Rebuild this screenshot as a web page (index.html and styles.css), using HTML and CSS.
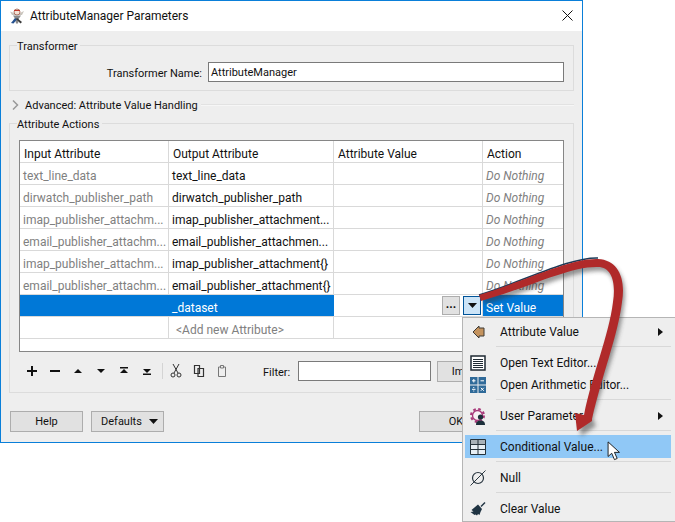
FILE: index.html
```html
<!DOCTYPE html>
<html lang="en">
<head>
<meta charset="utf-8">
<title>AttributeManager Parameters</title>
<link rel="stylesheet" href="styles.css">
</head>
<body>
<div class="stage">
  <div class="dialog">
    <header class="titlebar">
      <svg class="app-icon" width="16" height="16" viewBox="0 0 16 16"><path d="M1 3.500L5 5l6 0 4-2-2 4H3z" fill="#c9c4bc"/><circle cx="8" cy="4" r="3" fill="#f4e3d6" stroke="#a05a4a" stroke-width=".8"/><path d="M5 2.500h6" stroke="#c0392b"/><path d="M4 7.500h8l-2 3-1 5H7l-1-5z" fill="#8a8a8a"/><path d="M2 15l4-5 2 1.500-3.500 4z" fill="#24508f"/><path d="M8 10l5 4-1.500 1.500L7 11z" fill="#3a3a3a"/></svg>
      <span class="title-text">AttributeManager Parameters</span>
      <svg class="close" width="11" height="11" viewBox="0 0 11 11"><path d="M.5.5l10 10M10.500.5l-10 10" stroke="#111" stroke-width="1" fill="none"/></svg>
    </header>
    <div class="content">
      <fieldset class="group group-transformer">
        <legend>Transformer</legend>
        <div class="name-row">
          <label class="name-label">Transformer Name:</label>
          <div class="name-input">AttributeManager</div>
        </div>
      </fieldset>
      <div class="advanced">
        <svg width="7" height="10" viewBox="0 0 7 10"><path d="M1 .5l4.500 4.500-4.500 4.500" fill="none" stroke="#999" stroke-width="1.500"/></svg>
        <span class="advanced-text">Advanced: Attribute Value Handling</span>
        <i class="advanced-line"></i>
      </div>
      <fieldset class="group group-actions">
        <legend>Attribute Actions</legend>
        <div class="table">
          <div class="row head">
            <div class="cell">Input Attribute</div><div class="cell">Output Attribute</div><div class="cell">Attribute Value</div><div class="cell">Action</div>
          </div>
          <div class="row"><div class="cell in">text_line_data</div><div class="cell out">text_line_data</div><div class="cell"></div><div class="cell act">Do Nothing</div></div>
          <div class="row"><div class="cell in">dirwatch_publisher_path</div><div class="cell out">dirwatch_publisher_path</div><div class="cell"></div><div class="cell act">Do Nothing</div></div>
          <div class="row"><div class="cell in">imap_publisher_attachm...</div><div class="cell out">imap_publisher_attachment...</div><div class="cell"></div><div class="cell act">Do Nothing</div></div>
          <div class="row"><div class="cell in">email_publisher_attachm...</div><div class="cell out">email_publisher_attachmen...</div><div class="cell"></div><div class="cell act">Do Nothing</div></div>
          <div class="row"><div class="cell in">imap_publisher_attachm...</div><div class="cell out">imap_publisher_attachment{}</div><div class="cell"></div><div class="cell act">Do Nothing</div></div>
          <div class="row"><div class="cell in">email_publisher_attachm...</div><div class="cell out">email_publisher_attachment{}</div><div class="cell"></div><div class="cell act">Do Nothing</div></div>
          <div class="row selected">
            <div class="cell sel"></div><div class="cell sel">_dataset</div>
            <div class="cell value-tools">
              <span class="more">...</span>
              <span class="drop"><svg width="9" height="5" viewBox="0 0 9 5"><path d="M0 0h9L4.500 5z" fill="#111"/></svg></span>
            </div>
            <div class="cell sel">Set Value</div>
          </div>
          <div class="row"><div class="cell"></div><div class="cell add">&lt;Add new Attribute&gt;</div><div class="cell"></div><div class="cell"></div></div>
        </div>
        <div class="toolbar">
          <div class="tools">
            <svg width="12" height="12" viewBox="0 0 12 12"><path d="M6 1v10M1 6h10" stroke="#111" stroke-width="2"/></svg>
            <svg width="12" height="12" viewBox="0 0 12 12"><path d="M1 6h10" stroke="#111" stroke-width="2"/></svg>
            <svg width="12" height="12" viewBox="0 0 12 12"><path d="M2 8h8L6 4z" fill="#111"/></svg>
            <svg width="12" height="12" viewBox="0 0 12 12"><path d="M2 4h8L6 8z" fill="#111"/></svg>
            <svg width="12" height="12" viewBox="0 0 12 12"><path d="M2 8h8L6 4z M2 2h8v1.400H2z" fill="#111"/></svg>
            <svg width="12" height="12" viewBox="0 0 12 12"><path d="M2 4h8L6 8z M2 8.600h8V10H2z" fill="#111"/></svg>
            <i class="tool-sep"></i>
            <svg width="12" height="14" viewBox="0 0 12 14"><path d="M3 0l5 9M9 0L4 9" stroke="#333" fill="none"/><circle cx="3" cy="11" r="2" fill="none" stroke="#333"/><circle cx="9" cy="11" r="2" fill="none" stroke="#333"/></svg>
            <svg width="12" height="14" viewBox="0 0 12 14"><path d="M1.500 1.500h5v8h-5zM5 4.500h5.500v8H5z" fill="#eee" stroke="#333" stroke-width="1.200"/></svg>
            <svg width="12" height="14" viewBox="0 0 12 14"><path d="M2.500 3h7v9.500h-7z" fill="#eee" stroke="#777"/><path d="M4.500 1.500h3V4h-3z" fill="#eee" stroke="#777"/></svg>
          </div>
          <div class="filter-label">Filter:</div>
          <div class="filter-input"></div>
          <button class="btn import">Import</button>
        </div>
      </fieldset>
      <footer class="footer">
        <button class="btn">Help</button>
        <button class="btn defaults"><span>Defaults</span><svg width="9" height="5" viewBox="0 0 9 5"><path d="M0 0h9L4.500 5z" fill="#111"/></svg></button>
        <span class="spacer"></span>
        <button class="btn btn-ok">OK</button>
        <button class="btn">Cancel</button>
      </footer>
    </div>
  </div>

  <nav class="menu">
    <div class="item">
      <svg class="mi" width="16" height="16" viewBox="0 0 16 16"><path d="M3 8l6-6v2h5v8H9v2z" fill="#c4935e" stroke="#3f3a34"/></svg>
      <span>Attribute Value</span>
      <svg class="sub" width="5" height="8" viewBox="0 0 5 8"><path d="M0 0l5 4-5 4z" fill="#111"/></svg>
    </div>
    <hr>
    <div class="item">
      <svg class="mi" width="16" height="16" viewBox="0 0 16 16"><path d="M1 1h14v14H1z" fill="#fff" stroke="#1f2a33" stroke-width="1.500"/><path d="M3 4.500h10M3 6.500h10M3 8.500h10M3 10.500h10M3 12.500h10" stroke="#1f2a33"/></svg>
      <span>Open Text Editor...</span>
    </div>
    <div class="item">
      <svg class="mi" width="16" height="16" viewBox="0 0 16 16"><path d="M0 0h7.500v7.500H0zM8.500 0H16v7.500H8.500zM0 8.500h7.500V16H0zM8.500 8.500H16V16H8.500z" fill="#2f6a99"/><path d="M2 3.800h3.500M3.800 2v3.500M10.500 3.800H14M2 12.300h3.500M10.800 10.800l3 3M13.800 10.800l-3 3" stroke="#fff"/><path d="M3.250 10h1v1h-1zM3.250 13.500h1v1h-1z" fill="#fff"/></svg>
      <span>Open Arithmetic Editor...</span>
    </div>
    <hr>
    <div class="item">
      <svg class="mi gear" width="17" height="17" viewBox="0 0 17 17"><circle cx="7.500" cy="7.500" r="6.500" fill="none" stroke="#a8397a" stroke-width="2" stroke-dasharray="2.600 2.500"/><circle cx="7.500" cy="7.500" r="5" fill="#f8f0f4" stroke="#a8397a" stroke-width="1.400"/><circle cx="10.500" cy="9" r="2.600" fill="#1c2f3a"/><path d="M6 17c0-3.500 2-4.500 4.500-4.500s4.500 1 4.500 4.500z" fill="#1c2f3a"/></svg>
      <span>User Parameter</span>
      <svg class="sub" width="5" height="8" viewBox="0 0 5 8"><path d="M0 0l5 4-5 4z" fill="#111"/></svg>
    </div>
    <hr>
    <div class="item active">
      <svg class="mi" width="16" height="16" viewBox="0 0 16 16"><path d="M.5.500h15v15H.5z" fill="#e8eff4"/><path d="M.5.500h15v5H.5z" fill="#a9b2b8"/><path d="M.5.500h15v15H.5zM.5 5.500h15M.5 10.500h15M8 .5v15" fill="none" stroke="#26323a"/></svg>
      <span>Conditional Value...</span>
    </div>
    <hr>
    <div class="item">
      <svg class="mi" width="16" height="16" viewBox="0 0 16 16"><circle cx="8" cy="8" r="5.500" fill="none" stroke="#2a3640" stroke-width="1.200"/><path d="M.5 15.500L15.500.5" stroke="#2a3640"/></svg>
      <span>Null</span>
    </div>
    <hr>
    <div class="item">
      <svg class="mi" width="16" height="16" viewBox="0 0 16 16"><path d="M10.500 5l4-4 1 1-4 4z" fill="#1f3342"/><path d="M8 3.500L12 8l-1.500 3-1 3-1.500-1-1 1.500-1.500-1-1 .5L.5 11l3-.5L1.500 9z" fill="#1f3342"/></svg>
      <span>Clear Value</span>
    </div>
  </nav>

  <svg class="arrow" width="675" height="522" viewBox="0 0 675 522">
    <defs><filter id="shadow" x="-20%" y="-20%" width="150%" height="150%"><feGaussianBlur stdDeviation="2"/></filter></defs>
    <path class="arrow-shadow" filter="url(#shadow)" d="M483 298C528 284 572 263 600 263C620 264 628 282 624 306C620 340 604 380 593 419L596 426L581 436L579 418L587 419C594 380 611 340 615 306C618 287 614 271 600 271C572 270 528 293 485 304Z"/>
    <path class="arrow-edge" d="M479 295C525 281 570 257 598 258"/>
    <path class="arrow-body" d="M479 295C525 281 570 258 598 259C618 260 626 278 622 302C618 335 602 375 592 419L592 421L577 431L575 413L584 415C592 375 609 335 613 302C616 283 612 267 598 267C570 266 525 289 481 301Z"/>
  </svg>

  <svg class="cursor" width="14" height="20" viewBox="0 0 15 22"><path d="M1 1v16l4-3.500 3 7 3-1.300-3-6.700h5.500z" fill="#fff" stroke="#111"/></svg>
</div>
</body>
</html>
```
FILE: styles.css
```css
* { box-sizing: border-box; }
html, body { margin: 0; padding: 0; background: #fff; }
body {
  font-family: Roboto, "Noto Sans", sans-serif;
  font-size: 12px;
  color: #111;
  overflow: hidden;
}
.stage { position: relative; width: 675px; height: 522px; overflow: hidden; }
.dialog {
  width: 583px;
  height: 443px;
  border: 1px solid #0a7fd9;
  display: flex;
  flex-direction: column;
  background: #eeeeee;
}
.titlebar {
  height: 30px;
  flex: none;
  background: #fff;
  display: flex;
  align-items: center;
  padding: 0 9px 1px 8px;
}
.app-icon { flex: none; margin-right: 5px; }
.title-text { flex: 1; }
.content { flex: 1; display: flex; flex-direction: column; padding: 7px 8px 0 8px; }
.group {
  margin: 0;
  padding: 0;
  border: 1px solid #dcdcdc;
  min-width: 0;
}
.group legend {
  padding: 0 3px 0 0;
  margin-left: 7px;
  line-height: 18px;
  height: 14px;
  font-size: 11px;
}
.group-transformer { height: 53px; }
.name-row { display: flex; align-items: center; justify-content: flex-end; padding: 10px 9px 0 0; gap: 6px; font-size: 11px; }
.name-label { padding-top: 2px; }
.name-input {
  width: 356px;
  height: 20px;
  background: #fff;
  border: 1px solid #7a7a7a;
  padding-left: 2px;
  line-height: 20px;
}
.advanced { display: flex; align-items: center; height: 16px; margin-top: 6px; gap: 6px; padding-left: 3px; font-size: 11px; }
.advanced-line { flex: 1; height: 2px; background: #f6f6f6; border-top: 1px solid #e2e2e2; margin-left: -3px; }
.group-actions { height: 277px; margin-top: 3px; }
.table {
  margin: 10px 9px 0;
  height: 212px;
  background: #fff;
  border: 1px solid #868686;
}
.row {
  display: grid;
  grid-template-columns: 149px 165px 149px 1fr;
  height: 22px;
  border-bottom: 1px solid #d9d9d9;
}
.cell {
  border-right: 1px solid #d9d9d9;
  padding: 3px 0 0 3px;
  line-height: 21px;
  white-space: nowrap;
  overflow: hidden;
}
.cell:last-child { border-right: 0; }
.head .cell { padding-left: 4px; }
.in { color: #808080; }
.out { color: #111; }
.act { color: #808080; font-style: italic; }
.add { color: #808080; padding-left: 7px; }
.sel { background: #0078d7; color: #fff; border-right-color: #0078d7; }
.value-tools { display: flex; justify-content: flex-end; align-items: center; gap: 3px; padding: 0 1px 0 0; }
.more {
  width: 18px; height: 19px;
  background: #e1e1e1; border: 1px solid #adadad;
  line-height: 15px; text-align: center; font-weight: bold;
}
.drop {
  width: 18px; height: 19px;
  background: #cce4f7; border: 1px solid #005499;
  display: flex; align-items: center; justify-content: center;
}
.toolbar { display: flex; align-items: center; height: 20px; margin: 9px 9px 0; font-size: 11px; }
.tools { display: flex; align-items: center; gap: 11px; padding-left: 7px; width: 244px; height: 20px; }
.tool-sep { flex: none; width: 1px; height: 16px; background: #d4d4d4; margin: 0 -4px 0 -2px; }
.filter-label { width: 35px; padding-top: 2px; }
.filter-input { width: 133px; height: 20px; background: #fff; border: 1px solid #7a7a7a; }
.btn {
  font: inherit;
  font-size: 11px;
  color: inherit;
  height: 21px;
  width: 73px;
  flex: none;
  background: #e1e1e1;
  border: 1px solid #adadad;
  padding: 0;
}
.import { margin-left: 6px; width: 62px; }
.footer { display: flex; align-items: center; gap: 8px; margin-top: 18px; padding-left: 1px; }
.spacer { flex: 1; }
.btn-ok { width: 74px; }
.defaults { display: flex; align-items: center; justify-content: space-between; padding: 0 5px 0 9px; }
.menu {
  position: absolute;
  left: 462px;
  top: 317px;
  width: 214px;
  height: 205px;
  background: #eeeeee;
  border: 1px solid #b5b5b5;
  padding: 3px 4px 0 2px;
}
.menu hr { border: 0; height: 1px; background: #d8d8d8; margin: 3px 0 5px 31px; }
.item { display: flex; align-items: center; height: 22px; }
.item .mi { margin-left: 5px; margin-right: 14px; flex: none; }
.item .gear { margin-right: 13px; }
.item span { flex: 1; }
.item .sub { margin-right: 8px; }
.item.active { background: #90c8f6; height: 23px; margin-top: -1px; }
.arrow { position: absolute; left: 0; top: 0; pointer-events: none; }
.arrow-shadow { fill: #333; opacity: .5; }
.arrow-edge { fill: none; stroke: #1d3a57; stroke-width: 1.6; }
.arrow-body { fill: #b02a2a; }
.cursor { position: absolute; left: 607px; top: 441px; }
```
